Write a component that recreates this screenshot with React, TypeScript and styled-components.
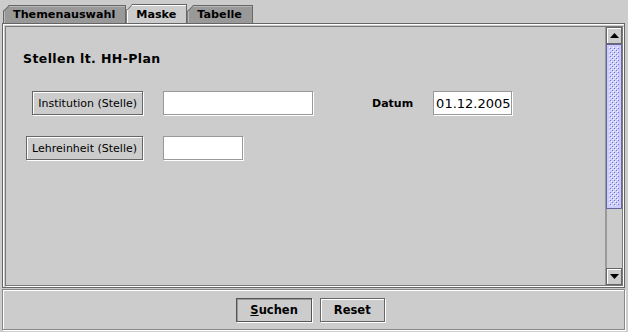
import React from 'react'
import styled, { createGlobalStyle } from 'styled-components'

const GlobalStyle = createGlobalStyle`
    html, body {
        margin: 0;
        padding: 0;
        background: #cccccc;
    }
    body {
        font-family: 'DejaVu Sans', 'Liberation Sans', sans-serif;
        font-size: 11px;
        color: #000;
    }
`

const Frame = styled.div`
    width: 628px;
    height: 332px;
    display: flex;
    flex-direction: column;
    background: #cccccc;
    overflow: hidden;
`

const TabStrip = styled.div`
    height: 23px;
    display: flex;
    align-items: flex-end;
    padding-left: 3px;
    box-sizing: border-box;
`

const Tab = styled.div<{ $active?: boolean }>`
    position: relative;
    height: ${(p) => (p.$active ? 19 : 18)}px;
    padding: 0 10px 0 9px;
    display: flex;
    align-items: center;
    box-sizing: border-box;
    font-weight: bold;
    font-size: 11.2px;
    background: ${(p) => (p.$active ? '#cccccc' : '#999999')};
    border: 1px solid #666666;
    border-bottom: none;
    box-shadow: inset 1px 1px 0 ${(p) => (p.$active ? '#ffffff' : '#b8b8b8')};
    clip-path: polygon(6px 0, 100% 0, 100% 100%, 0 100%, 0 6px);
    &::before {
        content: '';
        position: absolute;
        left: -1px;
        top: -1px;
        width: 9px;
        height: 1px;
        background: #666666;
        transform-origin: 0 0;
        transform: translate(0, 6px) rotate(-45deg);
    }
`

const TabBody = styled.div`
    flex: 1;
    display: flex;
    margin: 0 3px 0 2px;
    border: 1px solid #666666;
    box-shadow: inset 1px 1px 0 #ffffff;
    padding: 2px 1px 1px 2px;
    min-height: 0;
`

const ScrollPane = styled.div`
    flex: 1;
    display: flex;
    border: 1px solid #7a7a7a;
    box-shadow: 1px 1px 0 #ffffff;
`

const Viewport = styled.div`
    flex: 1;
    padding: 24px 0 0 17px;
`

const SectionTitle = styled.div`
    font-weight: bold;
    font-size: 12.5px;
    letter-spacing: 0.4px;
    height: 16px;
    line-height: 16px;
    margin-bottom: 24px;
`

const Form = styled.div`
    display: grid;
    grid-template-columns: 120px 150px auto auto;
    grid-auto-rows: 24px;
    justify-content: start;
    column-gap: 20px;
    row-gap: 21px;
    align-items: center;
`

const FieldButton = styled.button`
    justify-self: end;
    height: 24px;
    padding: 0 5px;
    white-space: nowrap;
    font-family: 'DejaVu Sans', 'Liberation Sans', sans-serif;
    font-size: 11px;
    color: #000;
    background: #cccccc;
    border: 1px solid #666666;
    box-shadow: inset 1px 1px 0 #ffffff, 1px 1px 0 #ffffff;
    cursor: pointer;
`

const TextField = styled.div<{ $w: number }>`
    width: ${(p) => p.$w}px;
    height: 24px;
    box-sizing: border-box;
    background: #ffffff;
    border: 1px solid #999999;
    box-shadow: 1px 1px 0 #ffffff;
    display: flex;
    align-items: center;
    padding-left: 2px;
    font-size: 13px;
`

const FieldLabel = styled.span`
    font-weight: bold;
    font-size: 11px;
    padding-left: 39px;
`

const Caret = styled.span`
    display: inline-block;
    width: 1px;
    height: 16px;
    background: #000;
    margin-left: 1px;
`

const ScrollBar = styled.div`
    width: 16px;
    display: flex;
    flex-direction: column;
    border-left: 1px solid #999999;
    background: #cccccc;
`

const ArrowButton = styled.div`
    height: 15px;
    display: flex;
    align-items: center;
    justify-content: center;
    background: #cccccc;
    border: 1px solid #666666;
    box-shadow: inset 1px 1px 0 #ffffff;
`

const Thumb = styled.div`
    height: 165px;
    box-sizing: border-box;
    border: 1px solid #666699;
    box-shadow: inset 1px 1px 0 #ccccff;
    background: #ccccff;
    padding: 2px;
    display: flex;
    svg {
        flex: 1;
    }
`

const Track = styled.div`
    flex: 1;
    border-left: 1px solid #999999;
`

const ButtonPanel = styled.div`
    height: 41px;
    margin: 1px 3px 2px 2px;
    padding-right: 6px;
    box-sizing: border-box;
    border: 1px solid #888888;
    box-shadow: inset 1px 1px 0 #ffffff, 1px 1px 0 #ffffff;
    display: flex;
    align-items: center;
    justify-content: center;
    gap: 8px;
`

const PushButton = styled.button<{ $focused?: boolean }>`
    height: 24px;
    padding: 0 13px;
    font-family: 'DejaVu Sans', 'Liberation Sans', sans-serif;
    font-weight: bold;
    font-size: 11.5px;
    color: #000;
    background: #cccccc;
    border: 1px solid ${(p) => (p.$focused ? '#555555' : '#666666')};
    box-shadow: inset 1px 1px 0 ${(p) => (p.$focused ? '#999999' : '#ffffff')}, 1px 1px 0 #ffffff;
    cursor: pointer;
    u {
        text-decoration: underline;
    }
`

const Bumps = () => (
    <svg width="100%" height="100%">
        <defs>
            <pattern id="bumps" width="4" height="4" patternUnits="userSpaceOnUse">
                <rect x="0" y="0" width="1" height="1" fill="#ffffff" />
                <rect x="1" y="1" width="1" height="1" fill="#7878b0" />
                <rect x="2" y="2" width="1" height="1" fill="#ffffff" />
                <rect x="3" y="3" width="1" height="1" fill="#7878b0" />
            </pattern>
        </defs>
        <rect width="100%" height="100%" fill="url(#bumps)" />
    </svg>
)

const Arrow = ({ up }: { up?: boolean }) => (
    <svg width="9" height="5" viewBox="0 0 9 5">
        <path d={up ? 'M4.5 0 L9 5 L0 5 Z' : 'M0 0 L9 0 L4.5 5 Z'} fill="#000" />
    </svg>
)

const App = () => {
    return (
        <Frame>
            <GlobalStyle />
            <TabStrip>
                <Tab>Themenauswahl</Tab>
                <Tab $active>Maske</Tab>
                <Tab>Tabelle</Tab>
            </TabStrip>
            <TabBody>
                <ScrollPane>
                    <Viewport>
                        <SectionTitle>Stellen lt. HH-Plan</SectionTitle>
                        <Form>
                            <FieldButton>Institution (Stelle)</FieldButton>
                            <TextField $w={150} />
                            <FieldLabel>Datum</FieldLabel>
                            <TextField $w={79}>
                                01.12.2005
                                <Caret />
                            </TextField>
                            <FieldButton>Lehreinheit (Stelle)</FieldButton>
                            <TextField $w={80} />
                        </Form>
                    </Viewport>
                    <ScrollBar>
                        <ArrowButton>
                            <Arrow up />
                        </ArrowButton>
                        <Thumb>
                            <Bumps />
                        </Thumb>
                        <Track />
                        <ArrowButton>
                            <Arrow />
                        </ArrowButton>
                    </ScrollBar>
                </ScrollPane>
            </TabBody>
            <ButtonPanel>
                <PushButton $focused>
                    <u>S</u>uchen
                </PushButton>
                <PushButton>Reset</PushButton>
            </ButtonPanel>
        </Frame>
    )
}

export default App
